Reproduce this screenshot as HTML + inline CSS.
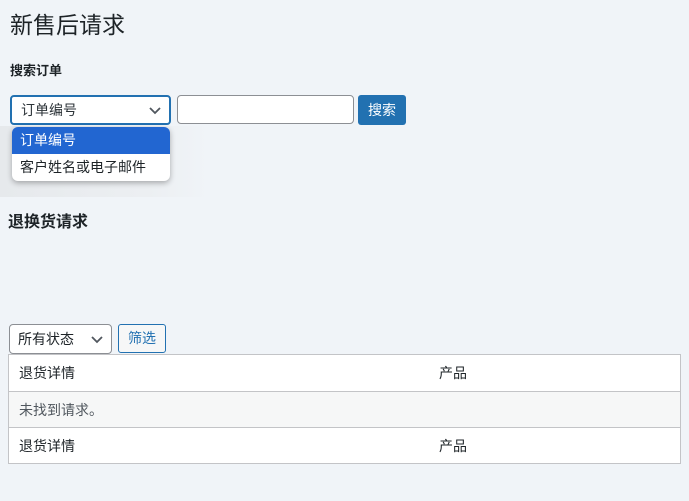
<!DOCTYPE html>
<html><head><meta charset="utf-8"><style>
body{margin:0;background:#f0f4f8;font-family:"Liberation Sans","Noto Sans CJK SC",sans-serif;color:#1d2327;width:689px;height:501px;overflow:hidden;position:relative}
.a{position:absolute}
h1{position:absolute;left:10px;top:6px;margin:0;font-size:23px;font-weight:400;color:#1d2327}
.lbl{left:10px;top:60px;font-size:13px;font-weight:700}
.sel{left:10px;top:95px;width:161px;height:30px;border:2px solid #2271b1;border-radius:4px;background:#fff;box-sizing:border-box;font-size:14px;color:#2c3338;line-height:26px;padding-left:9px}
.chev{position:absolute;right:8px;top:10px}
.inp{left:177px;top:95px;width:177px;height:29px;border:1px solid #8c8f94;border-radius:4px;background:#fff;box-sizing:border-box}
.btn{left:358px;top:95px;width:48px;height:30px;background:#2271b1;border-radius:3px;color:#fff;font-size:14px;text-align:center;line-height:30px}
.shadow{left:0;top:126px;width:210px;height:71px;background:linear-gradient(90deg,#e6e9ec 0%,#eceff2 70%,#f0f4f8 100%)}
.dd{left:12px;top:127px;width:158px;height:54px;background:#fff;border-radius:6px;box-shadow:0 2px 6px rgba(0,0,0,.3);overflow:hidden;font-size:14px}
.dd div{height:27px;line-height:27px;padding-left:8px;color:#1d2327}
.dd .on{background:#2266d1;color:#fff}
h2{position:absolute;left:8px;top:208px;margin:0;font-size:16px;font-weight:700}
.st{left:9px;top:324px;width:103px;height:30px;border:1px solid #8c8f94;border-radius:4px;background:#fff;box-sizing:border-box;font-size:14px;line-height:28px;padding-left:8px}
.fb{left:118px;top:324px;width:48px;height:29px;border:1px solid #2271b1;border-radius:3px;box-sizing:border-box;background:#f6f7f7;color:#2271b1;font-size:14px;text-align:center;line-height:27px}
.tbl{left:8px;top:354px;width:673px;height:110px;border:1px solid #c3c4c7;box-sizing:border-box;background:#fff;font-size:14px}
.r{position:absolute;left:0;right:0;height:36px;line-height:36px}
.r span{position:absolute;left:10px}.r b{position:absolute;left:430px;font-weight:400}
</style></head><body>
<h1>新售后请求</h1>
<div class="a lbl">搜索订单</div>
<div class="a shadow"></div>
<div class="a sel">订单编号<svg class="chev" width="12" height="8" viewBox="0 0 12 8"><path d="M1 1l5 5 5-5" fill="none" stroke="#50575e" stroke-width="1.8"/></svg></div>
<div class="a inp"></div>
<div class="a btn">搜索</div>
<div class="a dd"><div class="on">订单编号</div><div>客户姓名或电子邮件</div></div>
<h2>退换货请求</h2>
<div class="a st">所有状态<svg class="chev" width="12" height="8" viewBox="0 0 12 8" style="top:11px"><path d="M1 1l5 5 5-5" fill="none" stroke="#50575e" stroke-width="1.8"/></svg></div>
<div class="a fb">筛选</div>
<div class="a tbl">
<div class="r" style="top:0;border-bottom:1px solid #c3c4c7"><span>退货详情</span><b>产品</b></div>
<div class="r" style="top:37px;background:#f6f7f7;color:#50575e"><span>未找到请求。</span></div>
<div class="r" style="top:72px;border-top:1px solid #c3c4c7"><span>退货详情</span><b>产品</b></div>
</div>
</body></html>
